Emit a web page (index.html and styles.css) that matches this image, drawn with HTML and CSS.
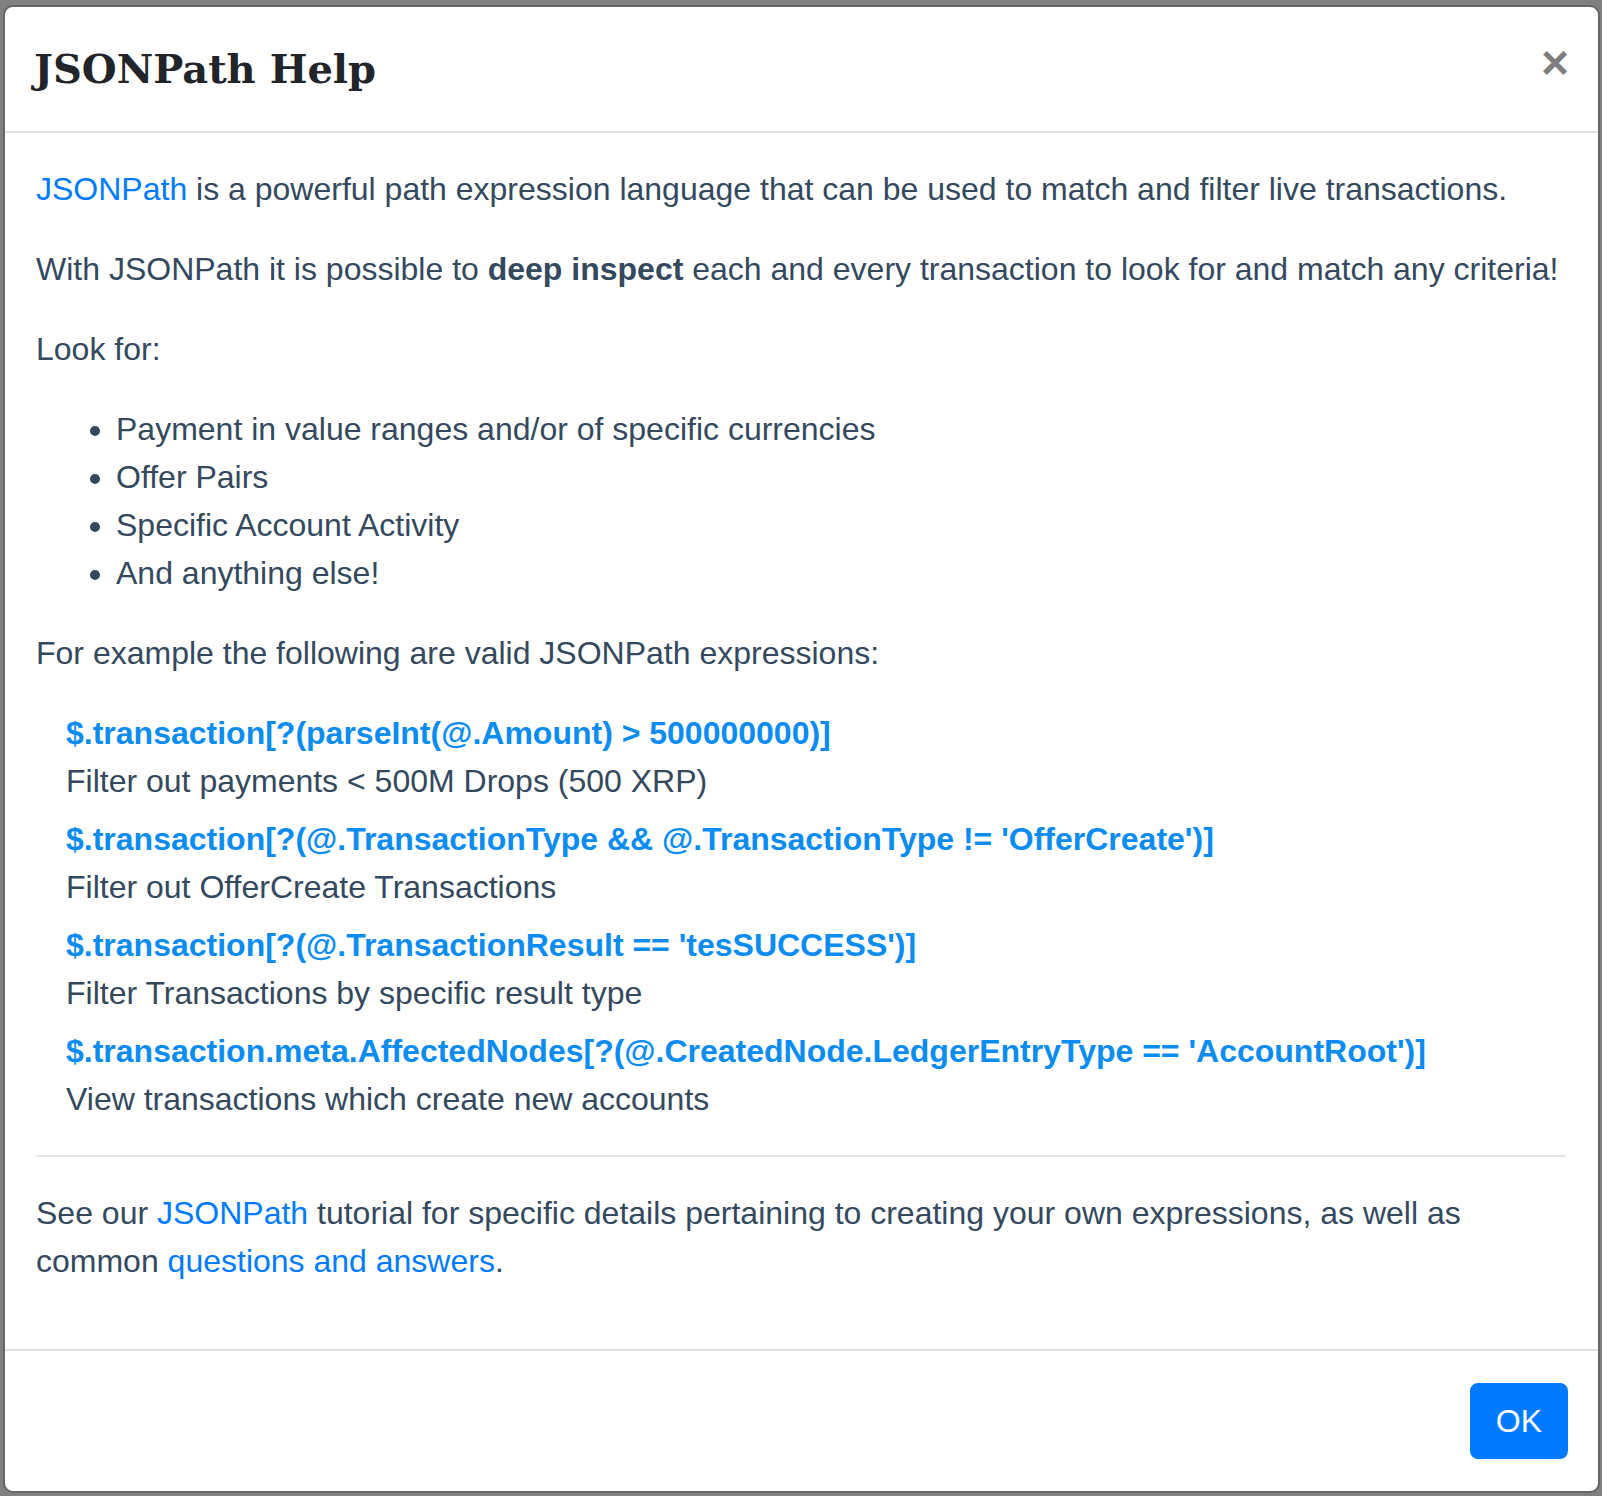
FILE: index.html
```html
<!DOCTYPE html>
<html lang="en">
<head>
<meta charset="utf-8">
<title>JSONPath Help</title>
<link rel="stylesheet" href="styles.css">
</head>
<body>
<div class="backdrop">
  <div class="modal">
    <div class="modal-header">
      <h5 class="modal-title">JSONPath Help</h5>
      <button class="close" type="button" aria-label="Close">×</button>
    </div>
    <div class="modal-body">
      <p><a href="#">JSONPath</a> is a powerful path expression language that can be used to match and filter live transactions.</p>
      <p>With JSONPath it is possible to <strong>deep inspect</strong> each and every transaction to look for and match any criteria!</p>
      <p>Look for:</p>
      <ul>
        <li>Payment in value ranges and/or of specific currencies</li>
        <li>Offer Pairs</li>
        <li>Specific Account Activity</li>
        <li>And anything else!</li>
      </ul>
      <p>For example the following are valid JSONPath expressions:</p>
      <div class="examples">
        <div class="example">
          <div class="expr">$.transaction[?(parseInt(@.Amount) &gt; 500000000)]</div>
          <div class="desc">Filter out payments &lt; 500M Drops (500 XRP)</div>
        </div>
        <div class="example">
          <div class="expr">$.transaction[?(@.TransactionType &amp;&amp; @.TransactionType != 'OfferCreate')]</div>
          <div class="desc">Filter out OfferCreate Transactions</div>
        </div>
        <div class="example">
          <div class="expr">$.transaction[?(@.TransactionResult == 'tesSUCCESS')]</div>
          <div class="desc">Filter Transactions by specific result type</div>
        </div>
        <div class="example">
          <div class="expr">$.transaction.meta.AffectedNodes[?(@.CreatedNode.LedgerEntryType == 'AccountRoot')]</div>
          <div class="desc">View transactions which create new accounts</div>
        </div>
      </div>
      <hr class="divider">
      <p>See our <a href="#">JSONPath</a> tutorial for specific details pertaining to creating your own expressions, as well as common <a href="#">questions and answers</a>.</p>
    </div>
    <div class="modal-footer">
      <button class="btn-ok" type="button">OK</button>
    </div>
  </div>
</div>
</body>
</html>
```

FILE: styles.css
```css
html, body {
  margin: 0;
  padding: 0;
}

body {
  background: #808080;
  font-family: "Liberation Sans", Arial, sans-serif;
  font-size: 32px;
  line-height: 1.5;
  color: #34495e;
}

.backdrop {
  padding: 5px 2px 0 3px;
  height: 1491px;
}

.modal {
  background: #fff;
  border: 2px solid #666666;
  border-radius: 10px;
  display: flex;
  flex-direction: column;
  overflow: hidden;
}

.modal-header {
  display: flex;
  align-items: flex-start;
  justify-content: space-between;
  padding: 32px 32px 32px 29px;
  border-bottom: 2px solid #dee2e6;
}

.modal-title {
  margin: 0;
  font-family: "DejaVu Serif", serif;
  font-weight: bold;
  font-size: 40px;
  line-height: 1.5;
  color: #212529;
}

.close {
  margin: -32px -35px -32px auto;
  padding: 32px;
  background: transparent;
  border: 0;
  font-family: "Liberation Sans", Arial, sans-serif;
  font-size: 48px;
  font-weight: 700;
  line-height: 1;
  color: #000;
  opacity: 0.5;
  cursor: pointer;
}

.modal-body {
  padding: 32px 32px 32px 31px;
}

.modal-body p {
  margin: 0 0 32px;
}

.modal-body ul {
  margin: 0 0 32px;
  padding-left: 80px;
}

a {
  color: #007bff;
  text-decoration: none;
}

strong {
  font-weight: bold;
}

.examples {
  padding-left: 30px;
}

.example {
  margin-bottom: 10px;
}

.example:last-child {
  margin-bottom: 0;
}

.expr {
  font-weight: bold;
  font-size: 32px;
  line-height: 48px;
  color: #0b8cf2;
}

.desc {
  line-height: 48px;
}

.divider {
  margin: 32px 0;
  border: 0;
  border-top: 2px solid #e6e6e6;
  height: 0;
}

.modal-footer {
  display: flex;
  justify-content: flex-end;
  align-items: center;
  padding: 24px 22px 24px 24px;
  border-top: 2px solid #dee2e6;
}

.btn-ok {
  margin: 8px;
  padding: 12px 24px;
  font-family: "Liberation Sans", Arial, sans-serif;
  font-size: 32px;
  line-height: 1.5;
  color: #fff;
  background: #007bff;
  border: 2px solid #007bff;
  border-radius: 8px;
  cursor: pointer;
}
```
